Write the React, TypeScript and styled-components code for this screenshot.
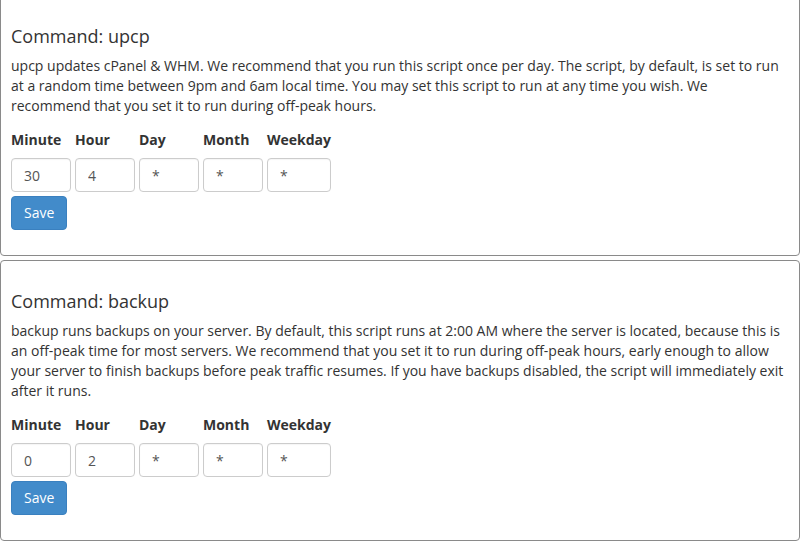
import React from "react";
import styled, { createGlobalStyle } from "styled-components";

const GlobalStyle = createGlobalStyle`
  html, body {
    margin: 0;
    padding: 0;
    background: #ffffff;
  }
  body {
    font-family: "Open Sans", "Liberation Sans", sans-serif;
    font-size: 14px;
    line-height: 20px;
    color: #333333;
  }
`;

const Page = styled.div`
  width: 800px;
  margin-top: -5px;
  display: flex;
  flex-direction: column;
  gap: 4px;
`;

const Panel = styled.section`
  border: 1px solid #8a8a8a;
  border-radius: 4px;
  padding: 20px 10px;
  background: #fff;
`;

const Title = styled.h4`
  margin: 10px 0 10px 0;
  font-size: 18px;
  line-height: 20px;
  font-weight: 400;
  color: #333;
`;

const Description = styled.p`
  margin: 0 0 10px 0;
  font-size: 14px;
  line-height: 20px;
  color: #333;
`;

const Fields = styled.div`
  display: flex;
  gap: 4px;
  padding-top: 4px;
`;

const Field = styled.label`
  display: flex;
  flex-direction: column;
  gap: 8px;
  min-width: 60px;
`;

const FieldLabel = styled.span`
  font-weight: 700;
  font-size: 14px;
  line-height: 20px;
  color: #333;
  white-space: nowrap;
`;

const Input = styled.input`
  box-sizing: border-box;
  width: 0;
  min-width: 100%;
  height: 34px;
  padding: 6px 12px;
  border: 1px solid #cccccc;
  border-radius: 4px;
  font-family: "Open Sans", "Liberation Sans", sans-serif;
  font-size: 14px;
  line-height: 20px;
  color: #555555;
  background: #fff;
  box-shadow: inset 0 1px 1px rgba(0, 0, 0, 0.04);
  outline: none;
`;

const SaveButton = styled.button`
  margin-top: 4px;
  margin-bottom: 5px;
  box-sizing: border-box;
  height: 34px;
  padding: 6px 12px;
  border: 1px solid #3a80bf;
  border-radius: 4px;
  background: #428bca;
  color: #ffffff;
  font-family: "Open Sans", "Liberation Sans", sans-serif;
  font-size: 14px;
  line-height: 20px;
  cursor: pointer;
`;

type Cron = { minute: string; hour: string; day: string; month: string; weekday: string };

const commands: { name: string; description: string; cron: Cron }[] = [
  {
    name: "upcp",
    description:
      "upcp updates cPanel & WHM. We recommend that you run this script once per day. The script, by default, is set to run at a random time between 9pm and 6am local time. You may set this script to run at any time you wish. We recommend that you set it to run during off-peak hours.",
    cron: { minute: "30", hour: "4", day: "*", month: "*", weekday: "*" },
  },
  {
    name: "backup",
    description:
      "backup runs backups on your server. By default, this script runs at 2:00 AM where the server is located, because this is an off-peak time for most servers. We recommend that you set it to run during off-peak hours, early enough to allow your server to finish backups before peak traffic resumes. If you have backups disabled, the script will immediately exit after it runs.",
    cron: { minute: "0", hour: "2", day: "*", month: "*", weekday: "*" },
  },
];

const fieldDefs: { key: keyof Cron; label: string }[] = [
  { key: "minute", label: "Minute" },
  { key: "hour", label: "Hour" },
  { key: "day", label: "Day" },
  { key: "month", label: "Month" },
  { key: "weekday", label: "Weekday" },
];

export default function App() {
  return (
    <>
      <GlobalStyle />
      <Page>
        {commands.map((c) => (
          <Panel key={c.name}>
            <Title>Command: {c.name}</Title>
            <Description>{c.description}</Description>
            <Fields>
              {fieldDefs.map((f) => (
                <Field key={f.key}>
                  <FieldLabel>{f.label}</FieldLabel>
                  <Input type="text" defaultValue={c.cron[f.key]} />
                </Field>
              ))}
            </Fields>
            <SaveButton type="button">Save</SaveButton>
          </Panel>
        ))}
      </Page>
    </>
  );
}
